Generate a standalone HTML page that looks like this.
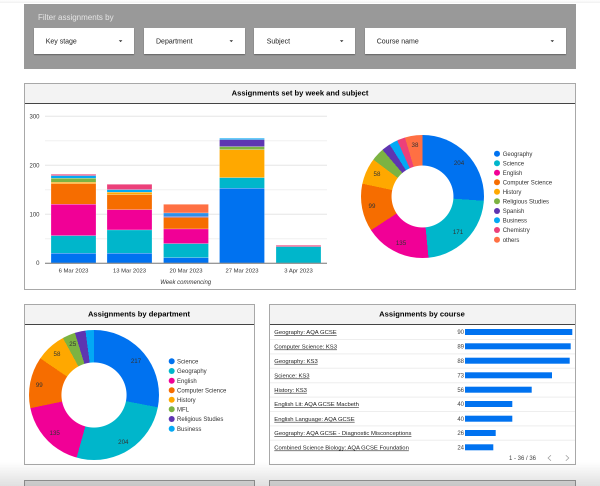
<!DOCTYPE html>
<html>
<head>
<meta charset="utf-8">
<title>Assignments dashboard</title>
<style>
html,body{margin:0;padding:0;background:#fff;}
#w{position:relative;width:600px;height:486px;overflow:hidden;background:#fff;font-family:"Liberation Sans",sans-serif;}
#b{position:absolute;left:0;top:0;width:600px;height:486px;filter:blur(.35px);}
.a{position:absolute;box-sizing:border-box;}
.panel{left:24px;top:4px;width:552px;height:65px;background:#999;}
.dd{top:28px;height:25.5px;background:#fff;box-shadow:0 1px 1px rgba(0,0,0,.35);}
.card{background:#fff;border:1px solid #a8a8a8;}
.hd{background:#f3f3f3;border-bottom:1px solid #444;}
.d{border-radius:50%;}
svg{position:absolute;left:0;top:0;}
text{font-family:"Liberation Sans",sans-serif;}
</style>
</head>
<body>
<div id="w">
<div id="b">
  <div class="a panel"></div>
  <div class="a dd" style="left:33.5px;width:100.5px"></div>
  <div class="a dd" style="left:144px;width:100.5px"></div>
  <div class="a dd" style="left:254px;width:101px"></div>
  <div class="a dd" style="left:365px;width:201px"></div>

  <div class="a card" style="left:24px;top:83px;width:552px;height:207px"></div>
  <div class="a hd" style="left:25px;top:84px;width:550px;height:20px"></div>

  <div class="a card" style="left:24px;top:304px;width:231px;height:161px"></div>
  <div class="a hd" style="left:25px;top:305px;width:229px;height:20px"></div>

  <div class="a card" style="left:269px;top:304px;width:307px;height:161px"></div>
  <div class="a hd" style="left:270px;top:305px;width:305px;height:20px"></div>

  <div class="a card" style="left:24px;top:480px;width:231px;height:20px;background:#e2e2e2;border-color:#999"></div>
  <div class="a card" style="left:269px;top:480px;width:307px;height:20px;background:#e2e2e2;border-color:#999"></div>

  <div class="a d" style="left:361px;top:135px;width:123px;height:123px;background:radial-gradient(circle,#fff 30.7px,transparent 31.2px),conic-gradient(#0072f0 0 94deg,#00b6cb 94deg 174.4deg,#f10096 174.4deg 236.8deg,#f66d00 236.8deg 282deg,#ffa800 282deg 306.9deg,#7cb342 306.9deg 319.4deg,#5e35b1 319.4deg 327.7deg,#03a9f4 327.7deg 335.7deg,#ec407a 335.7deg 343.4deg,#ff7043 343.4deg 360deg)"></div>

  <div class="a d" style="left:29.3px;top:330px;width:130px;height:130px;background:radial-gradient(circle,#fff 32.3px,transparent 32.8px),conic-gradient(#0072f0 0 100.9deg,#00b6cb 100.9deg 195.5deg,#f10096 195.5deg 258.3deg,#f66d00 258.3deg 304.3deg,#ffa800 304.3deg 331.4deg,#7cb342 331.4deg 342.9deg,#5e35b1 342.9deg 352.4deg,#03a9f4 352.4deg 360deg)"></div>

  <svg width="600" height="486" viewBox="0 0 600 486" xmlns="http://www.w3.org/2000/svg">
    <!-- filter text -->
    <text x="38" y="20" font-size="8" fill="#e4e4e4">Filter assignments by</text>
    <g font-size="7" fill="#222">
      <text x="45.7" y="43.3">Key stage</text>
      <text x="156" y="43.3">Department</text>
      <text x="266.7" y="43.3">Subject</text>
      <text x="376.7" y="43.3">Course name</text>
    </g>
    <g fill="#333">
      <path d="M118.8 40.2h3.6l-1.8 1.9z"/>
      <path d="M229.5 40.2h3.6l-1.8 1.9z"/>
      <path d="M339.9 40.2h3.6l-1.8 1.9z"/>
      <path d="M550.5 40.2h3.6l-1.8 1.9z"/>
    </g>

    <!-- titles -->
    <g font-size="7.6" font-weight="700" fill="#000" text-anchor="middle">
      <text x="300" y="95.5">Assignments set by week and subject</text>
      <text x="139" y="316.5">Assignments by department</text>
      <text x="422" y="316.5">Assignments by course</text>
    </g>

    <!-- gridlines -->
    <g stroke="#e6e6e6" stroke-width="1">
      <path d="M45 116.3H327M45 165.3H327M45 214.3H327"/>
    </g>
    <g stroke="#f0f0f0" stroke-width="1">
      <path d="M45 140.8H327M45 189.8H327M45 238.8H327"/>
    </g>

    <!-- bars -->
    <g stroke="#fff" stroke-opacity=".45" stroke-width=".5">
      <rect x="51" y="174.3" width="45" height="1.4" fill="#ec407a"/>
      <rect x="51" y="175.7" width="45" height="2.6" fill="#03a9f4"/>
      <rect x="51" y="178.3" width="45" height="4" fill="#7cb342"/>
      <rect x="51" y="182.3" width="45" height="1.4" fill="#ffa800"/>
      <rect x="51" y="183.7" width="45" height="20.6" fill="#f66d00"/>
      <rect x="51" y="204.3" width="45" height="31.4" fill="#f10096"/>
      <rect x="51" y="235.7" width="45" height="17.6" fill="#00b6cb"/>
      <rect x="51" y="253.3" width="45" height="9.7" fill="#0072f0"/>

      <rect x="107" y="184.3" width="45" height="5.4" fill="#ec407a"/>
      <rect x="107" y="189.7" width="45" height="2.6" fill="#03a9f4"/>
      <rect x="107" y="192.3" width="45" height="2.4" fill="#ffa800"/>
      <rect x="107" y="194.7" width="45" height="15" fill="#f66d00"/>
      <rect x="107" y="209.7" width="45" height="20.3" fill="#f10096"/>
      <rect x="107" y="230" width="45" height="23.3" fill="#00b6cb"/>
      <rect x="107" y="253.3" width="45" height="9.7" fill="#0072f0"/>

      <rect x="163.5" y="204.3" width="45" height="8.7" fill="#ff7043"/>
      <rect x="163.5" y="213" width="45" height="3.7" fill="#2f8fe8"/>
      <rect x="163.5" y="216.7" width="45" height=".8" fill="#5e35b1"/>
      <rect x="163.5" y="217.5" width="45" height="11.5" fill="#f66d00"/>
      <rect x="163.5" y="229" width="45" height="14.7" fill="#f10096"/>
      <rect x="163.5" y="243.7" width="45" height="14" fill="#00b6cb"/>
      <rect x="163.5" y="257.7" width="45" height="5.3" fill="#0072f0"/>

      <rect x="219.5" y="138.3" width="45" height="1.4" fill="#03a9f4"/>
      <rect x="219.5" y="139.7" width="45" height="7" fill="#5e35b1"/>
      <rect x="219.5" y="146.7" width="45" height="3" fill="#7cb342"/>
      <rect x="219.5" y="149.7" width="45" height="28" fill="#ffa800"/>
      <rect x="219.5" y="177.7" width="45" height="10.6" fill="#00b6cb"/>
      <rect x="219.5" y="188.3" width="45" height="74.7" fill="#0072f0"/>

      <rect x="276" y="245.3" width="45" height="1.4" fill="#ec407a"/>
      <rect x="276" y="246.7" width="45" height="16.3" fill="#00b6cb"/>
    </g>
    <path d="M45 263.3H327" stroke="#777" stroke-width="1"/>

    <!-- axis labels -->
    <g font-size="6" fill="#333" text-anchor="end">
      <text x="39.5" y="118.5">300</text>
      <text x="39.5" y="167.5">200</text>
      <text x="39.5" y="216.5">100</text>
      <text x="39.5" y="265.2">0</text>
    </g>
    <g font-size="5.9" fill="#333" text-anchor="middle">
      <text x="73.5" y="272.5">6 Mar 2023</text>
      <text x="129.5" y="272.5">13 Mar 2023</text>
      <text x="186" y="272.5">20 Mar 2023</text>
      <text x="242" y="272.5">27 Mar 2023</text>
      <text x="298.5" y="272.5">3 Apr 2023</text>
      <text x="185.7" y="284" font-size="6" font-style="italic">Week commencing</text>
    </g>

    <!-- donut 1 labels -->
    <g font-size="6.2" fill="#333" text-anchor="middle">
      <text x="459" y="165.2">204</text>
      <text x="458" y="234.2">171</text>
      <text x="401" y="245.2">135</text>
      <text x="372" y="208.2">99</text>
      <text x="377" y="176.2">58</text>
      <text x="415" y="147.2">38</text>
    </g>
    <!-- legend 1 -->
    <g>
      <circle cx="497" cy="153.7" r="3" fill="#0072f0"/>
      <circle cx="497" cy="163.3" r="3" fill="#00b6cb"/>
      <circle cx="497" cy="172.7" r="3" fill="#f10096"/>
      <circle cx="497" cy="182.3" r="3" fill="#f66d00"/>
      <circle cx="497" cy="191.7" r="3" fill="#ffa800"/>
      <circle cx="497" cy="201.3" r="3" fill="#7cb342"/>
      <circle cx="497" cy="211" r="3" fill="#5e35b1"/>
      <circle cx="497" cy="220.3" r="3" fill="#03a9f4"/>
      <circle cx="497" cy="230" r="3" fill="#ec407a"/>
      <circle cx="497" cy="239.7" r="3" fill="#ff7043"/>
    </g>
    <g font-size="6" fill="#333">
      <text x="502.7" y="155.9">Geography</text>
      <text x="502.7" y="165.5">Science</text>
      <text x="502.7" y="174.9">English</text>
      <text x="502.7" y="184.5">Computer Science</text>
      <text x="502.7" y="193.9">History</text>
      <text x="502.7" y="203.5">Religious Studies</text>
      <text x="502.7" y="213.2">Spanish</text>
      <text x="502.7" y="222.5">Business</text>
      <text x="502.7" y="232.2">Chemistry</text>
      <text x="502.7" y="241.9">others</text>
    </g>

    <!-- donut 2 labels -->
    <g font-size="6.2" fill="#333" text-anchor="middle">
      <text x="136" y="362.9">217</text>
      <text x="123.3" y="443.9">204</text>
      <text x="54.7" y="434.9">135</text>
      <text x="39.3" y="386.9">99</text>
      <text x="57" y="355.9">58</text>
      <text x="72.7" y="345.9">25</text>
    </g>
    <!-- legend 2 -->
    <g>
      <circle cx="171.7" cy="361.3" r="3" fill="#0072f0"/>
      <circle cx="171.7" cy="371" r="3" fill="#00b6cb"/>
      <circle cx="171.7" cy="380.7" r="3" fill="#f10096"/>
      <circle cx="171.7" cy="390.3" r="3" fill="#f66d00"/>
      <circle cx="171.7" cy="399.7" r="3" fill="#ffa800"/>
      <circle cx="171.7" cy="409.3" r="3" fill="#7cb342"/>
      <circle cx="171.7" cy="419" r="3" fill="#5e35b1"/>
      <circle cx="171.7" cy="428.7" r="3" fill="#03a9f4"/>
    </g>
    <g font-size="6" fill="#333">
      <text x="177" y="363.5">Science</text>
      <text x="177" y="373.2">Geography</text>
      <text x="177" y="382.9">English</text>
      <text x="177" y="392.5">Computer Science</text>
      <text x="177" y="401.9">History</text>
      <text x="177" y="411.5">MFL</text>
      <text x="177" y="421.2">Religious Studies</text>
      <text x="177" y="430.9">Business</text>
    </g>

    <!-- table rows -->
    <g stroke="#eeeeee" stroke-width="1">
      <path d="M270 339.5H575M270 353.9H575M270 368.3H575M270 382.7H575M270 397.1H575M270 411.5H575M270 425.9H575M270 440.3H575"/>
    </g>
    <g font-size="5.88" fill="#222" text-decoration="underline">
      <text x="274.3" y="334.2">Geography: AQA GCSE</text>
      <text x="274.3" y="348.5">Computer Science: KS3</text>
      <text x="274.3" y="362.9">Geography: KS3</text>
      <text x="274.3" y="377.5">Science: KS3</text>
      <text x="274.3" y="391.9">History: KS3</text>
      <text x="274.3" y="406.2">English Lit: AQA GCSE Macbeth</text>
      <text x="274.3" y="420.9">English Language: AQA GCSE</text>
      <text x="274.3" y="435.2">Geography: AQA GCSE - Diagnostic Misconceptions</text>
      <text x="274.3" y="449.5">Combined Science Biology: AQA GCSE Foundation</text>
    </g>
    <g font-size="6" fill="#444" text-anchor="end">
      <text x="464" y="334.2">90</text>
      <text x="464" y="348.5">89</text>
      <text x="464" y="362.9">88</text>
      <text x="464" y="377.5">73</text>
      <text x="464" y="391.9">56</text>
      <text x="464" y="406.2">40</text>
      <text x="464" y="420.9">40</text>
      <text x="464" y="435.2">26</text>
      <text x="464" y="449.5">24</text>
    </g>
    <g fill="#0072f0">
      <rect x="465" y="329" width="107.3" height="6"/>
      <rect x="465" y="343.3" width="105.7" height="6"/>
      <rect x="465" y="357.7" width="104.7" height="6"/>
      <rect x="465" y="372.3" width="87" height="6"/>
      <rect x="465" y="386.7" width="66.7" height="6"/>
      <rect x="465" y="401" width="47.3" height="6"/>
      <rect x="465" y="415.7" width="47.3" height="6"/>
      <rect x="465" y="430" width="30.7" height="6"/>
      <rect x="465" y="444.3" width="28.3" height="6"/>
    </g>
    <text x="509" y="459.8" font-size="6" fill="#444">1 - 36 / 36</text>
    <path d="M551 455.2l-3 2.8 3 2.8M565.8 455.2l3 2.8-3 2.8" fill="none" stroke="#999" stroke-width=".7"/>
  </svg>
</div>
<div class="a" style="left:0;top:0;width:600px;height:3px;background:linear-gradient(#fff,#f1f1f1)"></div>
<div class="a" style="left:0;top:462px;width:600px;height:24px;background:linear-gradient(rgba(0,0,0,0),rgba(0,0,0,.12));pointer-events:none"></div>
</div>
</body>
</html>
